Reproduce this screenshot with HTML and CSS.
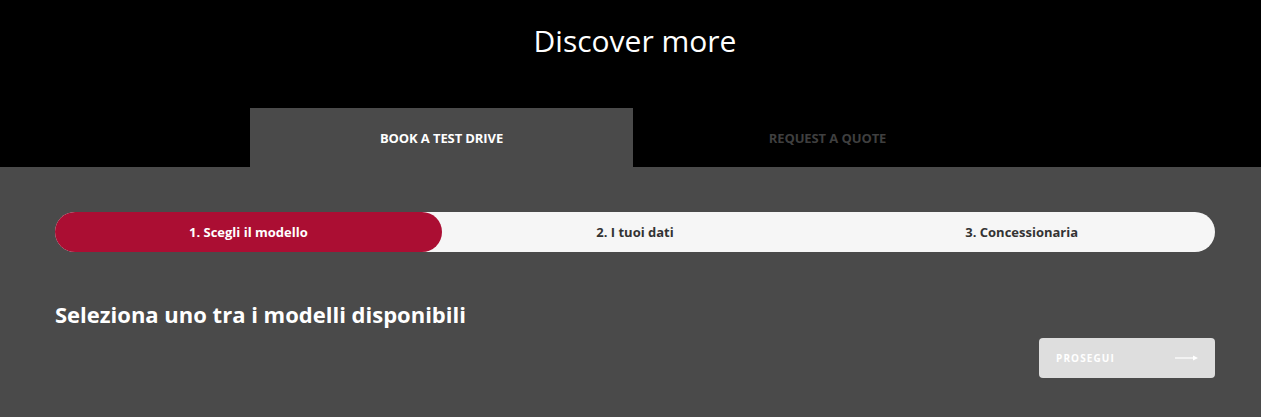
FILE: index.html
```html
<!DOCTYPE html>
<html>
<head>
<meta charset="utf-8">
<link rel="stylesheet" href="styles.css">
</head>
<body>
<header class="top">
  <h1 class="title">Discover more</h1>
  <nav class="tabs">
    <div class="tab active">BOOK A TEST DRIVE</div>
    <div class="tab">REQUEST A QUOTE</div>
  </nav>
</header>
<main class="panel">
  <div class="stepper">
    <div class="step current">1. Scegli il modello</div>
    <div class="step">2. I tuoi dati</div>
    <div class="step">3. Concessionaria</div>
  </div>
  <h2 class="subtitle">Seleziona uno tra i modelli disponibili</h2>
  <div class="actions">
    <button class="next">
      <span>PROSEGUI</span>
      <svg width="24" height="8" viewBox="0 0 24 8"><path d="M0 4h20" stroke="#fff" stroke-width="1.2"/><path d="M18 1.5 23 4 18 6.5z" fill="#fff"/></svg>
    </button>
  </div>
</main>
</body>
</html>
```
FILE: styles.css
```css
* { box-sizing: border-box; }
html, body { margin: 0; padding: 0; }
body {
  font-family: "Open Sans", "Liberation Sans", sans-serif;
  background: #4a4a4a;
  height: 417px;
  overflow: hidden;
}
.top {
  background: #000;
  padding-top: 21px;
}
.title {
  margin: 0;
  padding-left: 9px;
  text-align: center;
  color: #fff;
  font-weight: 400;
  font-size: 30px;
  line-height: 40px;
}
.tabs {
  display: flex;
  margin: 47px 0 0 250px;
}
.tab {
  width: 383px;
  height: 59px;
  display: flex;
  align-items: center;
  justify-content: center;
  font-size: 13px;
  font-weight: 700;
  color: #3f3f3f;
  letter-spacing: -0.1px;
}
.tab + .tab { width: 389px; }
.tab.active {
  background: #4a4a4a;
  color: #fff;
}
.panel {
  padding: 45px 46px 0 55px;
}
.stepper {
  display: flex;
  height: 40px;
  background: #f6f6f6;
  border-radius: 20px;
}
.step {
  flex: 1;
  display: flex;
  align-items: center;
  justify-content: center;
  font-size: 13px;
  font-weight: 700;
  color: #333;
  border-radius: 20px;
}
.step.current {
  background: #ab0e33;
  color: #fff;
}
.subtitle {
  margin: 47px 0 0;
  color: #fff;
  font-size: 22px;
  font-weight: 700;
  line-height: 30px;
}
.actions {
  display: flex;
  justify-content: flex-end;
  margin-top: 9px;
}
.next {
  width: 176px;
  height: 40px;
  border: 0;
  border-radius: 4px;
  background: #dedede;
  display: flex;
  align-items: center;
  justify-content: space-between;
  padding: 0 16px 0 17px;
  font-family: inherit;
  font-size: 10px;
  font-weight: 700;
  letter-spacing: 1.1px;
  color: #fff;
}
.next svg { display: block; }
```
